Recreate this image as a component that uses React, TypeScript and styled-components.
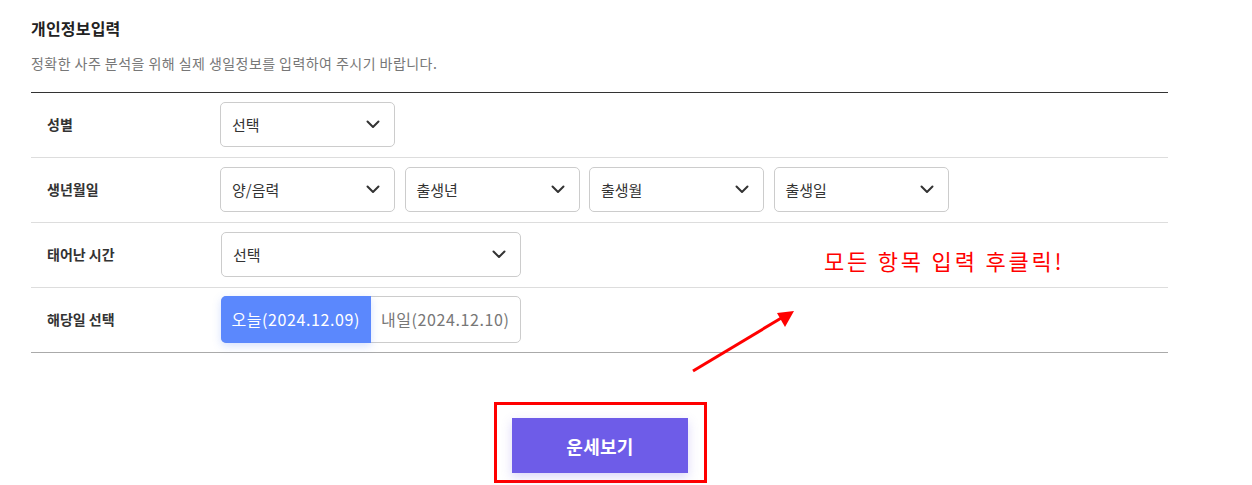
import React from "react";
import styled, { createGlobalStyle } from "styled-components";

const Global = createGlobalStyle`
  html, body { margin: 0; padding: 0; background: #fff; }
  body { font-family: "Noto Sans CJK KR", "Noto Sans", sans-serif; color: #333; }
  * { box-sizing: border-box; }
`;

const Page = styled.div`
  position: relative;
  width: 1252px;
  height: 485px;
  padding: 18px 0 0 31px;
`;

const Content = styled.div`
  width: 1137px;
`;

const Title = styled.h2`
  margin: 0;
  font-size: 16px;
  line-height: 20px;
  font-weight: 700;
  color: #222;
  letter-spacing: 0.2px;
`;

const Subtitle = styled.p`
  margin: 16px 0 0;
  font-size: 14px;
  line-height: 18px;
  color: #777;
  letter-spacing: 0.45px;
`;

const Table = styled.div`
  margin-top: 20px;
  border-top: 1px solid #333;
  border-bottom: 1px solid #aaa;
`;

const Row = styled.div`
  display: grid;
  grid-template-columns: 189px 1fr;
  align-items: center;
  height: 65px;
  padding-bottom: 2px;
  border-bottom: 1px solid #ddd;
  &:last-child { border-bottom: none; height: 64px; }
`;

const Label = styled.div`
  padding-left: 16px;
  font-size: 14px;
  font-weight: 700;
  color: #333;
`;

const Controls = styled.div<{ $shift?: number }>`
  display: flex;
  gap: 9.5px;
  margin-left: ${(p) => p.$shift ?? 0}px;
`;

const SelectBox = styled.div<{ $w: number }>`
  width: ${(p) => p.$w}px;
  height: 45px;
  border: 1px solid #ccc;
  border-radius: 5px;
  display: flex;
  align-items: center;
  justify-content: space-between;
  padding: 0 14px 0 11px;
  font-size: 15px;
  color: #333;
  background: #fff;
`;

const Toggle = styled.div`
  display: flex;
  width: 300px;
  height: 47px;
  border: 1px solid #ccc;
  border-radius: 5px;
  overflow: visible;
`;

const ToggleItem = styled.div<{ $active?: boolean }>`
  flex: 1;
  display: flex;
  align-items: center;
  justify-content: center;
  font-size: 16px;
  letter-spacing: 0.6px;
  color: ${(p) => (p.$active ? "#fff" : "#777")};
  background: ${(p) => (p.$active ? "#5b88fd" : "transparent")};
  border-radius: ${(p) => (p.$active ? "5px 0 0 5px" : "0 5px 5px 0")};
  box-shadow: ${(p) => (p.$active ? "0 3px 8px rgba(91,136,253,0.25)" : "none")};
  margin: ${(p) => (p.$active ? "-1px 0 -1px -1px" : "0")};
`;

const ButtonArea = styled.div`
  display: flex;
  justify-content: center;
  margin-top: 49px;
  padding-left: 2px;
`;

const Highlight = styled.div`
  border: 3px solid #ff0000;
  padding: 13px 16px 7px 15px;
`;

const SubmitButton = styled.button`
  width: 176px;
  height: 55px;
  border: none;
  background: #6e5ce8;
  color: #fff;
  font-family: "Noto Sans CJK KR", sans-serif;
  font-size: 18px;
  font-weight: 700;
  letter-spacing: 0.3px;
  box-shadow: 0 4px 10px rgba(110, 92, 232, 0.25);
  cursor: pointer;
`;

const Note = styled.div`
  position: absolute;
  left: 824px;
  top: 245px;
  font-family: "Noto Sans CJK KR", sans-serif;
  font-size: 22px;
  line-height: 30px;
  color: #ff0000;
  letter-spacing: 2.8px;
`;

const Arrow = styled.svg`
  position: absolute;
  left: 688px;
  top: 303px;
`;

const Chevron = () => (
  <svg width="14" height="9" viewBox="0 0 14 9" fill="none">
    <path d="M1.5 1.5 L7 7 L12.5 1.5" stroke="#333" strokeWidth="2" strokeLinecap="round" strokeLinejoin="round" />
  </svg>
);

const Select = ({ w, text }: { w: number; text: string }) => (
  <SelectBox $w={w}>
    <span>{text}</span>
    <Chevron />
  </SelectBox>
);

export default function App() {
  return (
    <>
      <Global />
      <Page>
        <Content>
          <Title>개인정보입력</Title>
          <Subtitle>정확한 사주 분석을 위해 실제 생일정보를 입력하여 주시기 바랍니다.</Subtitle>
          <Table>
            <Row>
              <Label>성별</Label>
              <Controls>
                <Select w={175} text="선택" />
              </Controls>
            </Row>
            <Row>
              <Label>생년월일</Label>
              <Controls>
                <Select w={175} text="양/음력" />
                <Select w={175} text="출생년" />
                <Select w={175} text="출생월" />
                <Select w={175} text="출생일" />
              </Controls>
            </Row>
            <Row>
              <Label>태어난 시간</Label>
              <Controls $shift={1}>
                <Select w={300} text="선택" />
              </Controls>
            </Row>
            <Row>
              <Label>해당일 선택</Label>
              <Controls $shift={1}>
                <Toggle>
                  <ToggleItem $active>오늘(2024.12.09)</ToggleItem>
                  <ToggleItem>내일(2024.12.10)</ToggleItem>
                </Toggle>
              </Controls>
            </Row>
          </Table>
          <ButtonArea>
            <Highlight>
              <SubmitButton>운세보기</SubmitButton>
            </Highlight>
          </ButtonArea>
        </Content>
        <Note>모든 항목 입력 후클릭!</Note>
        <Arrow width="110" height="75" viewBox="0 0 110 75">
          <line x1="5" y1="68" x2="95" y2="14" stroke="#ff0000" strokeWidth="3" />
          <polygon points="106,8 89,10 97,24" fill="#ff0000" />
        </Arrow>
      </Page>
    </>
  );
}
